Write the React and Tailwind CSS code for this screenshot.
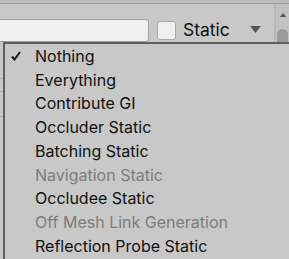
import React from "react";

const items = [
  { label: "Nothing", checked: true },
  { label: "Everything" },
  { label: "Contribute GI" },
  { label: "Occluder Static" },
  { label: "Batching Static" },
  { label: "Navigation Static", disabled: true },
  { label: "Occludee Static" },
  { label: "Off Mesh Link Generation", disabled: true },
  { label: "Reflection Probe Static" },
];

export default function App() {
  return (
    <div
      className="relative w-[289px] h-[259px] overflow-hidden bg-[#c8c8c8] text-[#101010]"
      style={{ fontFamily: "Inter, 'Noto Sans', sans-serif" }}
    >
      {/* top strip */}
      <div className="h-[3px] bg-[#bdbdbd]" />
      <div className="h-px bg-[#9a9a9a]" />

      <div className="flex h-[38px]">
        <div className="flex-1 flex items-center">
          {/* name field */}
          <div className="mt-[14px] w-[149px] h-[23px] bg-[#f0f0f0] border border-l-0 border-[#a0a0a0] rounded-r-[3px]" />
          {/* static toggle */}
          <div className="mt-[14px] ml-[8px] w-[19px] h-[19px] bg-[#f0f0f0] border border-[#a8a8a8] rounded-[3px]" />
          <span className="mt-[14px] ml-[7px] text-[17.5px] leading-none">Static</span>
          <svg className="mt-[12px] ml-[20px]" width="11" height="7" viewBox="0 0 11 7">
            <path d="M0 0H11L5.5 7Z" fill="#565656" />
          </svg>
        </div>
        {/* scrollbar */}
        <div className="w-[15px] bg-[#c2c2c2] border-l-2 border-[#b8b8b8] flex flex-col items-center">
          <svg className="mt-[9px]" width="10" height="6" viewBox="0 0 10 6">
            <path d="M0 6H10L5 0Z" fill="#5a5a5a" />
          </svg>
          <div className="mt-[12px] w-[11px] h-[20px] rounded-t-full bg-[#9c9c9c]" />
        </div>
      </div>

      {/* under-content peeking at the left */}
      <div className="w-[3px]">
        <div className="mt-[36px] h-px bg-[#b0b0b0]" />
        <div className="mt-[12px] h-px bg-[#b0b0b0]" />
        <div className="mt-[24px] h-px bg-[#b0b0b0]" />
      </div>

      {/* dropdown menu */}
      <div className="absolute left-[3px] top-[42px] w-[300px] h-[240px] bg-[#c8c8c8] border-l-2 border-t-2 border-[#5e5e5e]">
        {items.map((item) => (
          <div key={item.label} className="flex items-center h-[23.75px]">
            <div className="w-[30px] flex justify-start pl-[6px]">
              {item.checked && (
                <svg width="10" height="10" viewBox="0 0 10 10">
                  <path
                    d="M1 5.5L3.5 8.5L9 1"
                    fill="none"
                    stroke="#1a1a1a"
                    strokeWidth="2"
                  />
                </svg>
              )}
            </div>
            <span
              className={`text-[16px] leading-none ${
                item.disabled ? "text-[#7c7c7c]" : "text-[#111111]"
              }`}
            >
              {item.label}
            </span>
          </div>
        ))}
      </div>
    </div>
  );
}
